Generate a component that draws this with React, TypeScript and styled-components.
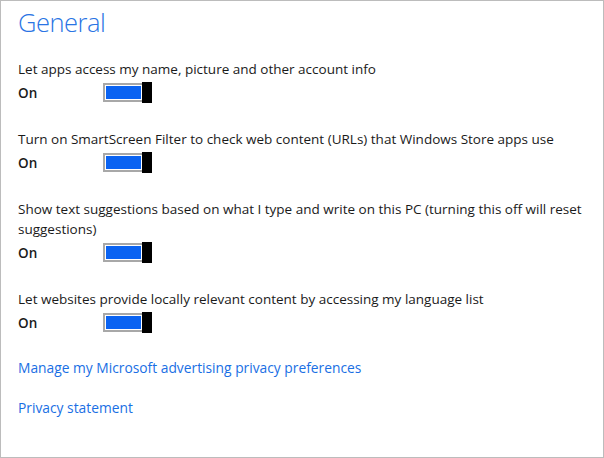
import React from "react";
import styled, { createGlobalStyle } from "styled-components";

const Global = createGlobalStyle`
  html, body { margin: 0; padding: 0; background: #ffffff; }
  * { box-sizing: border-box; }
`;

const Page = styled.div`
  width: 604px;
  height: 458px;
  border: 1px solid #bcbcbc;
  padding: 0 18px 0 17px;
  font-family: "Open Sans", "Noto Sans", sans-serif;
  color: #1a1a1a;
  display: flex;
  flex-direction: column;
`;

const Title = styled.h1`
  margin: 6px 0 0 0;
  font-size: 25.5px;
  font-weight: 300;
  line-height: 30px;
  letter-spacing: -0.5px;
  color: #2a74e4;
`;

const Settings = styled.div`
  display: flex;
  flex-direction: column;
  gap: 26px;
  margin-top: 22px;
`;

const Setting = styled.div`
  display: flex;
  flex-direction: column;
  gap: 3px;
`;

const Description = styled.div`
  font-size: 13.5px;
  line-height: 20px;
`;

const Row = styled.div`
  display: flex;
  align-items: center;
  height: 21px;
`;

const State = styled.span`
  width: 85px;
  font-size: 13.5px;
  font-weight: 600;
  line-height: 20px;
`;

const Toggle = styled.div<{ $on: boolean }>`
  width: 49px;
  height: 21px;
  display: flex;
  align-items: center;
`;

const Track = styled.div`
  width: 39px;
  height: 19px;
  border: 2px solid #a8a8a8;
  border-right: none;
  padding: 1px 1px 1px 1px;
  background: #ffffff;
  display: flex;
`;

const Fill = styled.div`
  flex: 1;
  background: #0a63f2;
`;

const Thumb = styled.div`
  width: 10px;
  height: 21px;
  background: #000000;
`;

const Links = styled.div`
  display: flex;
  flex-direction: column;
  gap: 20px;
  margin-top: 25px;
`;

const Link = styled.a`
  font-size: 13.8px;
  line-height: 20px;
  color: #1a6fe4;
  text-decoration: none;
  cursor: pointer;
  align-self: flex-start;
`;

const items = [
  "Let apps access my name, picture and other account info",
  "Turn on SmartScreen Filter to check web content (URLs) that Windows Store apps use",
  "Show text suggestions based on what I type and write on this PC (turning this off will reset suggestions)",
  "Let websites provide locally relevant content by accessing my language list",
];

export default function App() {
  return (
    <>
      <Global />
      <Page>
        <Title>General</Title>
        <Settings>
          {items.map((t) => (
            <Setting key={t}>
              <Description>{t}</Description>
              <Row>
                <State>On</State>
                <Toggle $on>
                  <Track>
                    <Fill />
                  </Track>
                  <Thumb />
                </Toggle>
              </Row>
            </Setting>
          ))}
        </Settings>
        <Links>
          <Link>Manage my Microsoft advertising privacy preferences</Link>
          <Link>Privacy statement</Link>
        </Links>
      </Page>
    </>
  );
}
